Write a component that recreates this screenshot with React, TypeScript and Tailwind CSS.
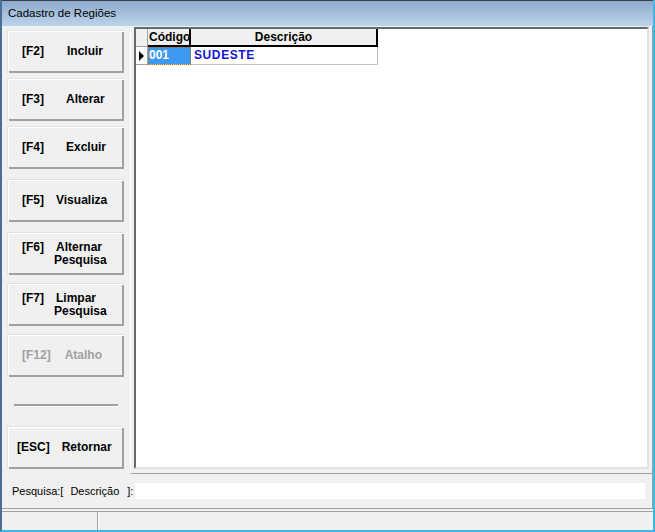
const btnFace =
  "h-[43px] w-[117px] ml-[5px] bg-[#f0f0f0] shadow-[inset_1px_1px_0_#e3e3e3,inset_2px_2px_0_#ffffff,inset_-1px_-1px_0_#a0a0a0,inset_-2px_-2px_0_#a0a0a0] text-[12px] font-bold leading-[13px] flex";

type Btn = {
  k: string;
  lines: string[];
  mt: string;
  gap: string;
  disabled?: boolean;
};

const buttons: Btn[] = [
  { k: "[F2]", lines: ["Incluir"], mt: "mt-[4px]", gap: "ml-[23px]" },
  { k: "[F3]", lines: ["Alterar"], mt: "mt-[5px]", gap: "ml-[22px]" },
  { k: "[F4]", lines: ["Excluir"], mt: "mt-[5px]", gap: "ml-[22px]" },
  { k: "[F5]", lines: ["Visualiza"], mt: "mt-[10px]", gap: "ml-[12px]" },
  { k: "[F6]", lines: ["Alternar", "Pesquisa"], mt: "mt-[10px]", gap: "ml-[12px]" },
  { k: "[F7]", lines: ["Limpar", "Pesquisa"], mt: "mt-[8px]", gap: "ml-[12px]" },
  { k: "[F12]", lines: ["Atalho"], mt: "mt-[8px]", gap: "ml-[14px]", disabled: true },
];

function Button({ b }: { b: Btn }) {
  const two = b.lines.length > 1;
  return (
    <div
      className={`${btnFace} ${b.mt} pl-[15px] ${two ? "items-start pt-[9px]" : "items-center"} ${
        b.disabled ? "text-[#a0a0a0]" : "text-black"
      }`}
    >
      <span>{b.k}</span>
      <div className={`${b.gap} flex flex-col`}>
        {b.lines.map((l, i) => (
          <span key={l} className={i === 1 ? "-ml-[2px]" : ""}>
            {l}
          </span>
        ))}
      </div>
    </div>
  );
}

export default function App() {
  return (
    <div
      className="w-[655px] h-[532px] flex flex-col bg-[#f0f0f0] border-l-2 border-l-[#4a6e96] border-r-2 border-r-[#3fb6e4] border-b-2 border-b-[#3fb6e4] overflow-hidden"
      style={{ fontFamily: '"Liberation Sans", Arial, sans-serif' }}
    >
      {/* title bar */}
      <div className="h-[26px] shrink-0 flex items-center pl-[6px] text-[11.5px] text-black border-t border-t-[#3a3f47] bg-gradient-to-b from-[#8eaacb] to-[#bcd3eb]">
        Cadastro de Regiões
      </div>

      <div className="h-[448px] shrink-0 flex">
        {/* left buttons */}
        <div className="w-[128px] shrink-0 flex flex-col">
          {buttons.map((b) => (
            <Button key={b.k} b={b} />
          ))}
          <div className="mt-[27px] ml-[12px] w-[104px] h-[3px] border-t-2 border-l border-[#a0a0a0] border-b border-b-white" />
          <div className={`${btnFace} items-center mt-[19px] pl-[10px] text-black`}>
            <span>[ESC]</span>
            <span className="ml-[12px]">Retornar</span>
          </div>
        </div>

        {/* right frame */}
        <div className="flex-1 flex flex-col border-l border-l-white border-b border-b-[#a0a0a0] border-r border-r-[#a0a0a0] pl-[3px] pr-[3px] pt-[1px] pb-[4px]">
          <div className="flex-1 bg-white border-t-2 border-l-2 border-t-[#696969] border-l-[#696969] border-r-2 border-b-2 border-r-[#e3e3e3] border-b-[#e3e3e3]">
            <div className="flex h-[18px] text-[12px] font-bold leading-[17px]">
              <div className="w-[12px] bg-[#f0f0f0] border-r border-b border-[#a0a0a0]" />
              <div className="w-[43px] bg-[#f0f0f0] border-r-2 border-b-2 border-black pl-[1px]">Código</div>
              <div className="w-[187px] bg-[#f0f0f0] border-r-2 border-b-2 border-black text-center">Descrição</div>
            </div>
            <div className="flex h-[18px] text-[12px] font-bold leading-[16px]">
              <div className="w-[12px] flex items-center justify-center border-r border-b border-[#a0a0a0]">
                <svg width="7" height="12" viewBox="0 0 7 12">
                  <path d="M1 1 L6 6 L1 11 Z" fill="#000" />
                </svg>
              </div>
              <div className="w-[43px] bg-[#3d98f0] text-white pl-[1px] outline outline-1 outline-dotted outline-[#c06a10] -outline-offset-1 border-b border-[#c0c0c0]">
                001
              </div>
              <div className="w-[187px] text-[#1414d2] pl-[3px] tracking-[0.6px] border-r border-b border-[#c0c0c0]">
                SUDESTE
              </div>
            </div>
          </div>
        </div>
      </div>

      {/* search bar */}
      <div className="h-[35px] shrink-0 flex items-center pl-[10px] pr-[7px] text-[11px] border-b border-b-[#a0a0a0] border-r border-r-[#a0a0a0]">
        <span>Pesquisa:[</span>
        <span className="ml-[7px]">Descrição</span>
        <span className="ml-[8px]">]:</span>
        <div className="ml-[2px] flex-1 h-[16px] bg-white" />
      </div>

      {/* status bar */}
      <div className="h-[19px] shrink-0 flex mt-[2px] border-t border-t-[#a0a0a0]">
        <div className="w-[96px] border-r border-r-[#a0a0a0]" />
        <div className="flex-1 border-l border-l-white" />
      </div>
    </div>
  );
}
